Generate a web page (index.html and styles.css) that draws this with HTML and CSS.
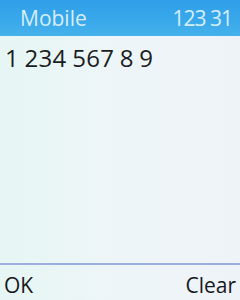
FILE: index.html
```html
<!DOCTYPE html>
<html>
<head>
<meta charset="utf-8">
<link rel="stylesheet" href="styles.css">
</head>
<body>
<div class="screen">
  <header class="header">
    <span class="title">Mobile</span>
    <span class="time">123 31</span>
  </header>
  <main class="content">
    <div class="number">1 234 567 8 9</div>
  </main>
  <footer class="softkeys">
    <span class="key">OK</span>
    <span class="key">Clear</span>
  </footer>
</div>
</body>
</html>
```
FILE: styles.css
```css
html, body {
  margin: 0;
  padding: 0;
}
body {
  width: 240px;
  height: 300px;
  overflow: hidden;
  font-family: "Open Sans", "DejaVu Sans", sans-serif;
}
.screen {
  width: 240px;
  height: 300px;
  display: flex;
  flex-direction: column;
  background: linear-gradient(90deg, #e6f6f4 0%, #eef5f8 50%, #eef3f8 100%);
}
.header {
  height: 36px;
  box-sizing: border-box;
  display: flex;
  justify-content: space-between;
  align-items: center;
  padding: 0 8px 1px 20px;
  background: linear-gradient(180deg, #2f9fe8 0%, #3aa9ea 60%, #45b2ec 100%);
  color: #d6eefc;
}
.title {
  font-size: 21px;
}
.time {
  font-size: 21px;
  letter-spacing: -1px;
}
.content {
  flex: 1;
  padding: 5px 0 0 5px;
}
.number {
  font-size: 24px;
  color: #1a1d22;
  word-spacing: -1px;
  letter-spacing: 0.3px;
}
.softkeys {
  height: 37px;
  box-sizing: border-box;
  border-top: 2px solid #9bb0dc;
  display: flex;
  justify-content: space-between;
  align-items: center;
  padding: 4px 4px 0 4px;
  font-size: 21px;
  color: #15181c;
}
```
